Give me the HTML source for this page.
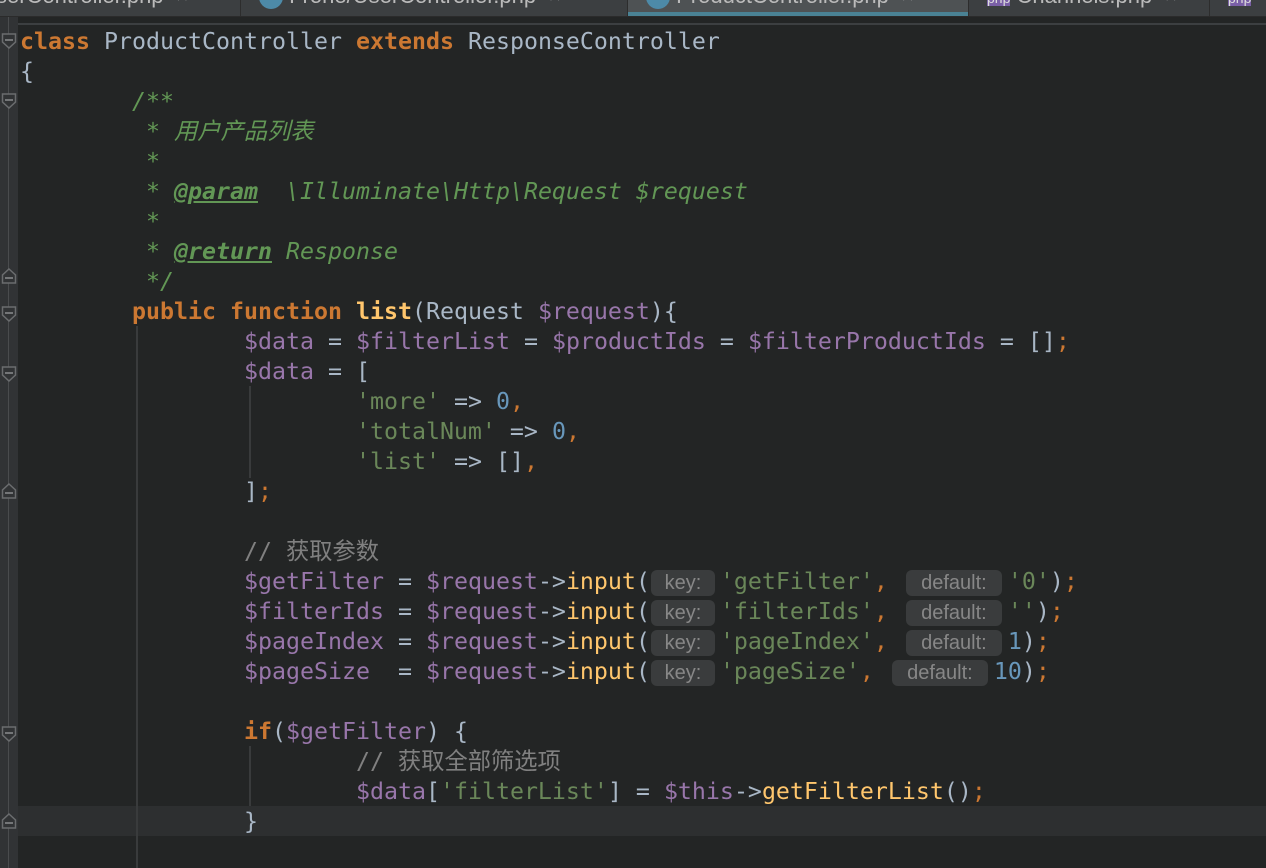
<!DOCTYPE html>
<html><head><meta charset="utf-8"><style>
html,body{margin:0;padding:0}
body{width:1266px;height:868px;overflow:hidden;background:#232525;position:relative;font-family:"DejaVu Sans Mono","Noto Sans CJK SC",monospace;font-size:23.25px;color:#a9b7c6}
.tabs{position:absolute;left:0;top:0;width:1266px;height:16px;background:#3c3f41;overflow:hidden;border-bottom:1px solid #2b2b2b}
.tab{position:absolute;top:0;height:16px;font-family:"Liberation Sans",sans-serif;font-size:22px;color:#bbb;overflow:hidden;border-right:1px solid #2d2d2d}
.tab span{position:absolute;top:-17px;white-space:nowrap}
.sep{position:absolute;left:18px;top:23px;width:1248px;height:2px;background:#3c3f41}
.gut{position:absolute;left:0;top:17px;width:18px;height:851px;background:#313335}
.gl{position:absolute;left:8px;top:17px;width:1px;height:851px;background:#4a4c4e}
.cur{position:absolute;left:18px;top:806px;width:1248px;height:30px;background:#2d2f30}
.ig{position:absolute;width:2px;background:#393b3c}
.l{position:absolute;left:20px;height:30px;line-height:32px;white-space:pre}
.k{color:#cc7832;font-weight:bold}
.o{color:#cc7832}
.c{color:#629755;font-style:italic}
.ct{color:#629755;font-style:italic;font-weight:bold;text-decoration:underline}
.cm{color:#808080}
.v{color:#9876aa}
.s{color:#6a8759}
.n{color:#6897bb}
.f{color:#ffc66d}
.fb{color:#ffc66d;font-weight:bold}
.b{display:inline-block;height:26px;line-height:26px;vertical-align:middle;background:#3a3c3d;color:#878787;font-family:"Liberation Sans",sans-serif;font-size:20px;border-radius:6px;text-align:center;margin-top:-4px}
.key{width:64px;margin:0 5px 0 1px}
.def{width:96px;margin:0 6px 0 4px}
</style></head><body>
<div class="tabs">
<div class="tab" style="left:0;width:240px"><span style="left:-4px">serController.php &nbsp;×</span></div>
<div class="tab" style="left:241px;width:386px;background:#3c3f41"><span style="left:18px"><b style="display:inline-block;width:24px;height:24px;border-radius:12px;background:#4d8aa8;vertical-align:middle"></b> Frone/UserController.php &nbsp;×</span></div>
<div class="tab" style="left:628px;width:340px;background:#4e5254"><span style="left:18px"><b style="display:inline-block;width:24px;height:24px;border-radius:12px;background:#4d8aa8;vertical-align:middle"></b> ProductController.php &nbsp;×</span><div style="position:absolute;left:0;bottom:0;width:340px;height:4px;background:#4a8294"></div></div>
<div class="tab" style="left:969px;width:240px"><span style="left:18px"><b style="font-size:14px;background:#7a5fa6;color:#ddd;font-weight:normal">php</b> Channels.php &nbsp;×</span></div>
<div class="tab" style="left:1210px;width:60px"><span style="left:18px"><b style="font-size:14px;background:#7a5fa6;color:#ddd;font-weight:normal">php</b></span></div>
</div>
<div class="sep"></div>
<div class="gut"></div>
<div class="gl"></div>
<div class="cur"></div>
<svg style="position:absolute;left:0;top:0" width="18" height="868">
<g fill="#313335" stroke="#6a6c6e" stroke-width="1.5">
<path d="M2.5 34h13v8l-6.5 6l-6.5-6z"/><path d="M2.5 94h13v8l-6.5 6l-6.5-6z"/>
<path d="M9 269l6.5 6v8h-13v-8z"/><path d="M2.5 307h13v8l-6.5 6l-6.5-6z"/>
<path d="M2.5 367h13v8l-6.5 6l-6.5-6z"/><path d="M9 484l6.5 6v8h-13v-8z"/>
<path d="M2.5 727h13v8l-6.5 6l-6.5-6z"/><path d="M9 814l6.5 6v8h-13v-8z"/>
</g>
<g stroke="#8a8c8e" stroke-width="1.5"><path d="M5 40h8M5 100h8M5 278h8M5 313h8M5 373h8M5 493h8M5 733h8M5 823h8"/></g>
</svg>
<div class="ig" style="left:136px;top:326px;height:542px"></div>
<div class="ig" style="left:249px;top:386px;height:92px"></div>
<div class="ig" style="left:249px;top:746px;height:60px"></div>
<div class="l" style="top:26px"><span class="k">class</span> ProductController <span class="k">extends</span> ResponseController</div>
<div class="l" style="top:56px">{</div>
<div class="l c" style="top:86px">        /**</div>
<div class="l c" style="top:116px">         * 用户产品列表</div>
<div class="l c" style="top:146px">         *</div>
<div class="l c" style="top:176px">         * <span class="ct">@param</span>  \Illuminate\Http\Request $request</div>
<div class="l c" style="top:206px">         *</div>
<div class="l c" style="top:236px">         * <span class="ct">@return</span> Response</div>
<div class="l c" style="top:266px">         */</div>
<div class="l" style="top:296px">        <span class="k">public function</span> <span class="fb">list</span>(Request <span class="v">$request</span>){</div>
<div class="l" style="top:326px">                <span class="v">$data</span> = <span class="v">$filterList</span> = <span class="v">$productIds</span> = <span class="v">$filterProductIds</span> = []<span class="o">;</span></div>
<div class="l" style="top:356px">                <span class="v">$data</span> = [</div>
<div class="l" style="top:386px">                        <span class="s">'more'</span> =&gt; <span class="n">0</span><span class="o">,</span></div>
<div class="l" style="top:416px">                        <span class="s">'totalNum'</span> =&gt; <span class="n">0</span><span class="o">,</span></div>
<div class="l" style="top:446px">                        <span class="s">'list'</span> =&gt; []<span class="o">,</span></div>
<div class="l" style="top:476px">                ]<span class="o">;</span></div>
<div class="l cm" style="top:536px">                // 获取参数</div>
<div class="l" style="top:566px">                <span class="v">$getFilter</span> = <span class="v">$request</span>-&gt;<span class="f">input</span>(<span class="b key">key:</span><span class="s">'getFilter'</span><span class="o">,</span> <span class="b def">default:</span><span class="s">'0'</span>)<span class="o">;</span></div>
<div class="l" style="top:596px">                <span class="v">$filterIds</span> = <span class="v">$request</span>-&gt;<span class="f">input</span>(<span class="b key">key:</span><span class="s">'filterIds'</span><span class="o">,</span> <span class="b def">default:</span><span class="s">''</span>)<span class="o">;</span></div>
<div class="l" style="top:626px">                <span class="v">$pageIndex</span> = <span class="v">$request</span>-&gt;<span class="f">input</span>(<span class="b key">key:</span><span class="s">'pageIndex'</span><span class="o">,</span> <span class="b def">default:</span><span class="n">1</span>)<span class="o">;</span></div>
<div class="l" style="top:656px">                <span class="v">$pageSize</span>  = <span class="v">$request</span>-&gt;<span class="f">input</span>(<span class="b key">key:</span><span class="s">'pageSize'</span><span class="o">,</span> <span class="b def">default:</span><span class="n">10</span>)<span class="o">;</span></div>
<div class="l" style="top:716px">                <span class="k">if</span>(<span class="v">$getFilter</span>) {</div>
<div class="l cm" style="top:746px">                        // 获取全部筛选项</div>
<div class="l" style="top:776px">                        <span class="v">$data</span>[<span class="s">'filterList'</span>] = <span class="v">$this</span>-&gt;<span class="f">getFilterList</span>()<span class="o">;</span></div>
<div class="l" style="top:806px">                }</div>
</body></html>
